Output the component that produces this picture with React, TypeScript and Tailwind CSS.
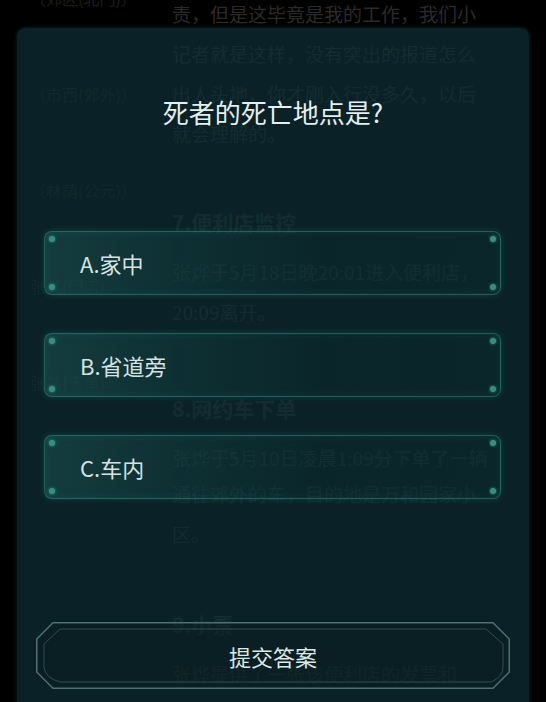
import React from "react";

const font = "font-['Noto_Sans_CJK_SC','Noto_Sans',sans-serif]";

const sideLabels = ["〔郊区(北门)〕", "〔市西(郊外)〕", "〔林荫(公元)〕", "张某(门店)", "张某(下单)"];

const options = ["A.家中", "B.省道旁", "C.车内"];

function Corner({ className }: { className: string }) {
  return <span className={`absolute h-[6px] w-[6px] rounded-full bg-[#35917f] shadow-[0_0_3px_rgba(70,190,170,0.7)] ${className}`} />;
}

function OptionButton({ label }: { label: string }) {
  return (
    <button className="relative flex h-[64px] w-full items-center rounded-[8px] border-[1.5px] border-[rgba(50,140,130,0.55)] bg-[linear-gradient(90deg,rgba(34,100,96,0.4)_0%,rgba(24,80,80,0.3)_30%,rgba(14,52,56,0.22)_60%,rgba(14,50,54,0.26)_100%)] pl-[35px] text-left shadow-[0_0_6px_rgba(40,140,130,0.3),inset_0_0_10px_rgba(60,170,160,0.12)]">
      <Corner className="left-[4px] top-[4px]" />
      <Corner className="right-[4px] top-[4px]" />
      <Corner className="bottom-[4px] left-[4px]" />
      <Corner className="bottom-[4px] right-[4px]" />
      <span className="text-[22px] leading-none text-[#d6e3e2]">{label}</span>
    </button>
  );
}

function SubmitButton() {
  return (
    <button className="relative mx-[19px] flex h-[67px] items-center justify-center">
      <svg className="absolute inset-0" width="474" height="67" viewBox="0 0 474 67" fill="none">
        <polygon
          points="17,0.75 457,0.75 473.25,17 473.25,50 457,66.25 17,66.25 0.75,50 0.75,17"
          fill="rgba(8,26,30,0.35)"
          stroke="#4c7074"
          strokeWidth="1.5"
        />
        <path
          d="M24 7 H450 L467 22 V45 Q467 55 455 60 H24 Q9 56 8 45 V22 Z"
          stroke="#2d4e52"
          strokeWidth="1"
        />
      </svg>
      <span className="relative text-[22px] leading-none text-[#dde7e6]">提交答案</span>
    </button>
  );
}

export default function App() {
  return (
    <div className={`relative h-[702px] w-[546px] overflow-hidden bg-black ${font}`}>
      {/* page underneath the dialog */}
      <div className="flex">
        <div className="ml-[30px] mt-[-14px] flex w-[142px] flex-col text-[16px] leading-[24px] text-[#1c1c1c]">
          {sideLabels.map((s, i) => (
            <div key={i} className="h-[24px] [&:not(:first-child)]:mt-[72px]">
              {s}
            </div>
          ))}
        </div>
        <div className="mt-[-6px] flex flex-col text-[19px] leading-[40px] text-[#2a2a2a]">
          <p>责，但是这毕竟是我的工作，我们小</p>
          <p>记者就是这样，没有突出的报道怎么</p>
          <p>出人头地，你才刚入行没多久，以后</p>
          <p>就会理解的。</p>
          <h3 className="mt-[48px] text-[21px] font-bold">7.便利店监控</h3>
          <p className="mt-[10px]">张烨于5月18日晚20:01进入便利店，</p>
          <p>20:09离开。</p>
          <h3 className="mt-[56px] text-[21px] font-bold">8.网约车下单</h3>
          <p className="mt-[10px]">张烨于5月10日凌晨1:09分下单了一辆</p>
          <p className="mt-[-4px]">通往郊外的车，目的地是万和园家小</p>
          <p>区。</p>
          <h3 className="mt-[50px] text-[21px] font-bold">9.小票</h3>
          <p className="mt-[10px]">张烨提供了一张该便利店的发票和</p>
        </div>
      </div>

      {/* question dialog */}
      <div className="absolute left-[17px] top-[28px] flex h-[700px] w-[512px] flex-col rounded-[8px] bg-[rgba(14,46,52,0.74)] shadow-[0_0_4px_rgba(40,90,95,0.4)]">
        <h1 className="mt-[68px] text-center text-[26px] leading-[32px] text-[#e6efee]">死者的死亡地点是?</h1>
        <div className="mt-[103px] flex flex-col gap-[38px] pl-[27px] pr-[28px]">
          {options.map((o) => (
            <OptionButton key={o} label={o} />
          ))}
        </div>
        <div className="mt-[123px] flex flex-col">
          <SubmitButton />
        </div>
      </div>
    </div>
  );
}
